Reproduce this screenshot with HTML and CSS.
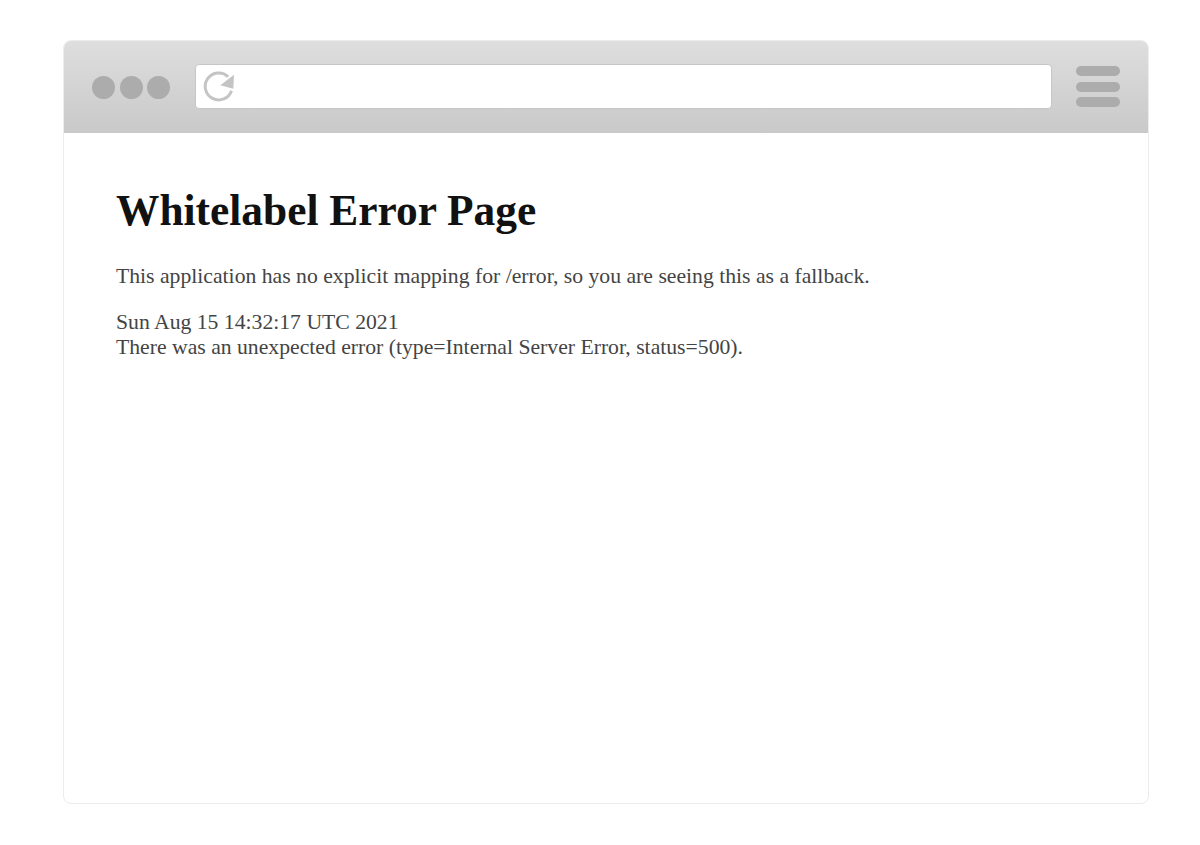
FILE: index.html
```html
<!DOCTYPE html>
<html lang="en">
<head>
<meta charset="utf-8">
<title>Whitelabel Error Page</title>
<link rel="stylesheet" href="styles.css">
</head>
<body>
<div class="window">
  <header class="toolbar">
    <div class="dots"><span class="dot"></span><span class="dot"></span><span class="dot"></span></div>
    <div class="address">
      <svg class="reload" width="33" height="33" viewBox="0 0 33 33" fill="none">
        <path d="M25.2 6.8A13.5 13.5 0 1 0 28.5 20.7" stroke="#c4c4c4" stroke-width="3"/>
        <path d="M17.3 15.3L31 4.7L30.3 18.7Z" fill="#c4c4c4"/>
      </svg>
    </div>
    <div class="menu"><span class="bar"></span><span class="bar"></span><span class="bar"></span></div>
  </header>
  <main class="content">
    <h1 class="title">Whitelabel Error Page</h1>
    <p class="lead">This application has no explicit mapping for /error, so you are seeing this as a fallback.</p>
    <div class="detail">Sun Aug 15 14:32:17 UTC 2021</div>
    <div class="detail">There was an unexpected error (type=Internal Server Error, status=500).</div>
  </main>
</div>
</body>
</html>
```

FILE: styles.css
```css
html, body { margin: 0; padding: 0; background: #fff; }
body { padding: 40px 51px 41px 63px; }
.window {
  height: 764px;
  box-sizing: border-box;
  border: 1px solid #ececec;
  border-radius: 8px;
  overflow: hidden;
  display: flex;
  flex-direction: column;
}
.toolbar {
  height: 92px;
  flex: none;
  display: flex;
  align-items: center;
  background: linear-gradient(#dedede, #c9c9c9);
  padding: 0 28px 1px 28px;
  box-sizing: border-box;
}
.dots { display: flex; gap: 4.7px; margin-top: 2px; }
.dot { width: 23px; height: 23px; border-radius: 50%; background: #acacac; }
.address {
  flex: 1;
  height: 45px;
  box-sizing: border-box;
  margin: 0 24px 0 25px;
  background: #fff;
  border: 1px solid #c6c6c6;
  border-radius: 4px;
  display: flex;
  align-items: center;
  padding-left: 6.5px;
}
.reload { display: block; }
.menu { display: flex; flex-direction: column; gap: 5.5px; }
.bar { width: 44px; height: 10px; border-radius: 5px; background: #acacac; }
.content {
  padding: 52px 52px;
  font-family: "Liberation Serif", "Times New Roman", serif;
  font-size: 21.7px;
  line-height: 25px;
  color: #444;
}
.title {
  margin: 0 0 29px;
  font-size: 43.4px;
  line-height: 50px;
  font-weight: bold;
  color: #111;
}
.lead { margin: 0 0 21px; }
```
